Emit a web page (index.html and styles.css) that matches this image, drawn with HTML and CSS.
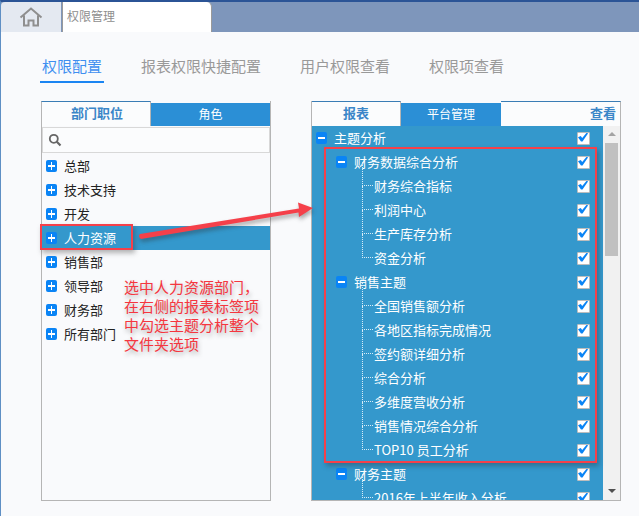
FILE: index.html
```html
<!DOCTYPE html>
<html lang="zh">
<head>
<meta charset="utf-8">
<title>权限管理</title>
<link rel="stylesheet" href="styles.css">
</head>
<body>
<div class="app">
  <header class="topbar">
    <div class="home-tab">
      <svg width="24" height="20" viewBox="0 0 24 20"><path d="M1.500 10.500 12 1.500l10.500 9M5 8.500V18.500h4.500v-5h5v5H19V8.500" fill="none" stroke="#8f8f8f" stroke-width="2"/></svg>
    </div>
    <div class="title-tab">权限管理</div>
  </header>
  <main class="page">
    <nav class="nav">
      <a class="nav-item active">权限配置</a>
      <a class="nav-item">报表权限快捷配置</a>
      <a class="nav-item">用户权限查看</a>
      <a class="nav-item">权限项查看</a>
    </nav>
    <div class="panels">
      <section class="panel left">
        <div class="tabs">
          <div class="tab on w110">部门职位</div>
          <div class="tab off grow">角色</div>
        </div>
        <div class="search">
          <svg width="14" height="14" viewBox="0 0 14 14"><circle cx="5.800" cy="5.800" r="4" fill="none" stroke="#666" stroke-width="1.800"/><path d="m8.800 8.800 3.700 3.700" stroke="#666" stroke-width="2.200"/></svg>
        </div>
        <ul class="dept">
          <li class="dept-row"><i class="exp plus"></i><span class="label">总部</span></li>
          <li class="dept-row"><i class="exp plus"></i><span class="label">技术支持</span></li>
          <li class="dept-row"><i class="exp plus"></i><span class="label">开发</span></li>
          <li class="dept-row sel"><i class="exp plus"></i><span class="label">人力资源</span></li>
          <li class="dept-row"><i class="exp plus"></i><span class="label">销售部</span></li>
          <li class="dept-row"><i class="exp plus"></i><span class="label">领导部</span></li>
          <li class="dept-row"><i class="exp plus"></i><span class="label">财务部</span></li>
          <li class="dept-row"><i class="exp plus"></i><span class="label">所有部门</span></li>
        </ul>
      </section>
      <section class="panel right">
        <div class="tabs">
          <div class="tab on w90">报表</div>
          <div class="tab off w100">平台管理</div>
          <div class="tab on grow view">查看</div>
        </div>
        <div class="tree-wrap">
          <ul class="tree">
            <li class="node l0"><i class="exp"></i><span class="label">主题分析</span><b class="chk"></b></li>
            <li class="node l1"><i class="exp"></i><span class="label">财务数据综合分析</span><b class="chk"></b></li>
            <li class="node leaf"><i class="dots"></i><span class="label">财务综合指标</span><b class="chk"></b></li>
            <li class="node leaf"><i class="dots"></i><span class="label">利润中心</span><b class="chk"></b></li>
            <li class="node leaf"><i class="dots"></i><span class="label">生产库存分析</span><b class="chk"></b></li>
            <li class="node leaf"><i class="dots"></i><span class="label">资金分析</span><b class="chk"></b></li>
            <li class="node l1"><i class="exp"></i><span class="label">销售主题</span><b class="chk"></b></li>
            <li class="node leaf"><i class="dots"></i><span class="label">全国销售额分析</span><b class="chk"></b></li>
            <li class="node leaf"><i class="dots"></i><span class="label">各地区指标完成情况</span><b class="chk"></b></li>
            <li class="node leaf"><i class="dots"></i><span class="label">签约额详细分析</span><b class="chk"></b></li>
            <li class="node leaf"><i class="dots"></i><span class="label">综合分析</span><b class="chk"></b></li>
            <li class="node leaf"><i class="dots"></i><span class="label">多维度营收分析</span><b class="chk"></b></li>
            <li class="node leaf"><i class="dots"></i><span class="label">销售情况综合分析</span><b class="chk"></b></li>
            <li class="node leaf"><i class="dots"></i><span class="label">TOP10 员工分析</span><b class="chk"></b></li>
            <li class="node l1"><i class="exp"></i><span class="label">财务主题</span><b class="chk"></b></li>
            <li class="node leaf"><i class="dots"></i><span class="label">2016年上半年收入分析</span><b class="chk"></b></li>
          </ul>
          <div class="scrollbar">
            <span class="arrow up"></span>
            <span class="thumb"></span>
            <span class="arrow down"></span>
          </div>
        </div>
      </section>
    </div>
  </main>
  <div class="mark mark-left"></div>
  <div class="mark mark-right"></div>
  <svg class="arrow-shot" width="190" height="56" viewBox="0 0 190 56">
    <path d="M10 46 169 20.500l-1-6 15 5.500-14 9-.5-4.500L11 51q-3.500-2.500-1-5z" fill="#f5404a"/>
  </svg>
  <p class="note">选中人力资源部门，<br>在右侧的报表标签项<br>中勾选主题分析整个<br>文件夹选项</p>
</div>
</body>
</html>
```
FILE: styles.css
```css
* { box-sizing: border-box; }
html, body { margin: 0; padding: 0; }
body { font-family: "Noto Sans CJK SC", "Noto Sans", sans-serif; background: #f9fafc; }
ul { list-style: none; margin: 0; padding: 0; }
.app { position: relative; width: 639px; height: 516px; overflow: hidden; border-top: 2px solid #2b5496; border-left: 1px solid #5f8fc4; background: #f9fafc; }
.topbar { display: flex; height: 30px; background: #7e96bb; }
.home-tab { width: 60px; display: flex; align-items: center; justify-content: center; background: #e4e9f1; border-radius: 4px 0 0 0; }
.title-tab { width: 150px; margin-left: 1px; padding-left: 4px; background: #fff; border-left: 1px solid #9a9a9a; border-right: 1px solid #9a9a9a; border-radius: 0 5px 0 0; font-size: 12px; line-height: 28px; color: #8e8e8e; }
.page { padding: 21px 0 0 40px; }
.nav { display: flex; height: 29px; }
.nav-item { font-size: 15px; line-height: 25px; color: #999; margin-right: 39px; }
.nav-item.active { color: #3f8ff0; width: 64px; margin-left: -1px; margin-right: 37px; padding-left: 2px; border-bottom: 2px solid #1b85f2; height: 30px; }
.panels { display: flex; gap: 40px; margin-top: 19px; }
.panel { height: 400px; border: 1px solid #b5b5b5; border-top: 0; display: flex; flex-direction: column; }
.left { width: 230px; }
.right { width: 310px; }
.tabs { display: flex; height: 25px; flex: none; }
.tab { font-size: 13px; text-align: center; line-height: 22px; }
.tab.on { background: #fbfcfd; color: #3a86c8; font-weight: 700; border-top: 1px solid #3a7db5; border-right: 1px solid #b5b5b5; }
.tab.off { background: #2b8fd6; color: #fff; margin-top: 2px; font-size: 12px; line-height: 21px; height: 23px; }
.w110 { width: 110px; margin-left: -1px; border-left: 1px solid #b5b5b5; padding-left: 2px; }
.w90 { width: 89px; }
.w100 { width: 100px; }
.grow { flex: 1; }
.view { text-align: right; padding-right: 4px; margin-right: -1px; }
.search { height: 26px; flex: none; margin-top: 1px; display: flex; align-items: center; padding-left: 5px; background: #fbfcfd; border: 1px solid #d8d8d8; }
.dept { padding-top: 1px; }
.dept-row { height: 24px; display: flex; align-items: center; padding-left: 4px; font-size: 13px; color: #222; }
.dept-row.sel { background: #3498cc; color: #fff; }
.exp { width: 11px; height: 12px; flex: none; margin-right: 7px; border-radius: 2px; background: linear-gradient(#fff, #fff) center / 7px 2px no-repeat, #0a84f5; }
.exp.plus { background: linear-gradient(#fff, #fff) center / 7px 2px no-repeat, linear-gradient(#fff, #fff) center / 1px 8px no-repeat, #0a84f5; }
.tree-wrap { flex: 1; display: flex; min-height: 0; }
.tree { flex: 1; height: 374px; background: #3498cc; overflow: hidden; }
.node { height: 24px; display: flex; align-items: center; font-size: 13px; color: #fff; }
.label { padding-bottom: 2px; white-space: nowrap; }
.node .label { flex: 1; }
.l0 { padding-left: 4px; }
.l1 { padding-left: 24px; }
.leaf { padding-left: 50px; }
.dots { width: 11px; height: 24px; flex: none; align-self: flex-start; margin-top: -12px; margin-right: 1px; border-left: 1px dotted #d7ecf7; border-bottom: 1px dotted #d7ecf7; }
.chk { flex: none; width: 13px; height: 13px; margin-right: 13px; border: 1.500px solid #bdbdbd; border-radius: 1px; background: #fff; position: relative; }
.chk::after { content: ""; position: absolute; left: 0; top: 0; width: 10px; height: 9px; background: #0a84f5; clip-path: polygon(0 52%, 28% 38%, 42% 60%, 88% 0, 100% 12%, 45% 100%, 30% 100%); }
.scrollbar { width: 17px; flex: none; background: #f1f1f1; display: flex; flex-direction: column; align-items: center; padding: 4px 0; }
.thumb { width: 13px; height: 113px; margin-top: 7px; background: #c0c0c0; }
.arrow { width: 0; height: 0; border-left: 4px solid transparent; border-right: 4px solid transparent; }
.arrow.up { border-bottom: 4px solid #a3a3a3; margin-top: 2px; }
.arrow.down { border-top: 4px solid #505050; margin-top: auto; margin-bottom: 3px; }
.mark { position: absolute; border: 2px solid #f5404a; box-shadow: 2px 3px 5px rgba(40,40,40,.35); }
.mark-left { left: 39px; top: 222px; width: 93px; height: 26px; }
.mark-right { left: 323px; top: 145px; width: 273px; height: 316px; }
.arrow-shot { position: absolute; left: 129px; top: 186px; filter: drop-shadow(1px 3px 2px rgba(40,40,40,.4)); }
.note { position: absolute; left: 123px; top: 275px; margin: 0; font-size: 15px; line-height: 19px; color: #f5363f; text-shadow: 1px 3px 4px rgba(40,40,40,.35); }
```
